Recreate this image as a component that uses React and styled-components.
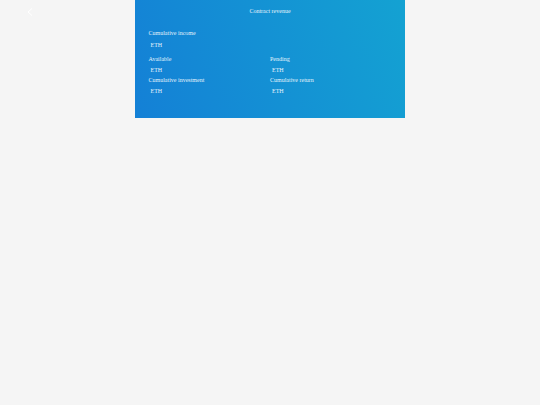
import styled, { createGlobalStyle } from "styled-components";

const GlobalStyle = createGlobalStyle`
    body {
        margin: 0;
        background-color: #f5f5f5;
        font-family: "Liberation Serif", "Times New Roman", serif;
    }
`

const Page = styled.div`
    display: grid;
    grid-template-columns: 1fr 2fr 1fr;
    align-items: start;
`

const BackButton = styled.button`
    display: flex;
    justify-self: start;
    margin: 8px 0 0 20%;
    padding: 0;
    border: none;
    background: none;
    color: white;
    cursor: pointer;
`

const Card = styled.main`
    padding: 0 5% 22px;
    color: #e4f3fc;
    background: linear-gradient(70deg, #1480d6, #14a2d2);
`

const Title = styled.h1`
    margin: 0 0 5px;
    font-size: 6px;
    line-height: 23px;
    font-weight: normal;
    text-align: center;
`

const Stats = styled.dl`
    display: grid;
    grid-template-columns: 1fr 1fr;
    margin: 0;
`

const Stat = styled.div`
    grid-column: ${({$wide}) => $wide ? '1 / -1' : 'auto'};
    margin-bottom: ${({$wide}) => $wide ? '3px' : '0'};
`

const Label = styled.dt`
    font-size: 6px;
    line-height: 11px;
`

const Value = styled.dd`
    margin: 0 0 0 2px;
    font-size: 6px;
    line-height: ${({$large}) => $large ? '12px' : '10px'};
`

const stats = [
    {label: 'Cumulative income', total: true},
    {label: 'Available'},
    {label: 'Pending'},
    {label: 'Cumulative investment'},
    {label: 'Cumulative return'}
]

const App = () => {
    return (
        <>
            <GlobalStyle />
            <Page>
                <BackButton type="button" aria-label="Back">
                    <svg width="6" height="8" viewBox="0 0 6 8" fill="none" stroke="currentColor">
                        <path d="M5 0.5 L1 4 L5 7.5" />
                    </svg>
                </BackButton>
                <Card>
                    <Title>Contract revenue</Title>
                    <Stats>
                        {stats.map(({label, total}) => (
                            <Stat key={label} $wide={total}>
                                <Label>{label}</Label>
                                <Value $large={total}>ETH</Value>
                            </Stat>
                        ))}
                    </Stats>
                </Card>
            </Page>
        </>
    )
}

export default App
